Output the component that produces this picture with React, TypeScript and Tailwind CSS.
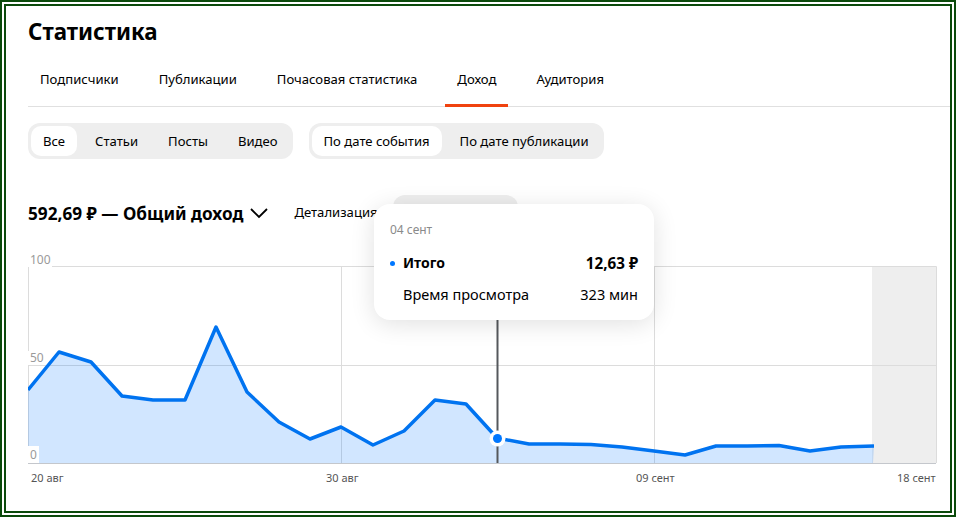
const font = "font-['Noto_Sans','Open_Sans',sans-serif]";

const tabs = ["Подписчики", "Публикации", "Почасовая статистика", "Доход", "Аудитория"];
const types = ["Все", "Статьи", "Посты", "Видео"];
const dates = ["По дате события", "По дате публикации"];

const points: [number, number][] = [
  [28, 390], [59, 352], [91, 362], [122, 396], [153, 400], [185, 400], [216, 327], [247, 392],
  [279, 422], [310, 439], [341, 427], [373, 445], [404, 431], [435, 400], [466, 404], [497, 438],
  [529, 444], [560, 444], [591, 444.5], [622, 447], [654, 451], [685, 455], [716, 446], [747, 446],
  [779, 445.5], [810, 451], [841, 447], [874, 446],
];

// svg starts at page (28,266)
const line = points.map(([x, y]) => `${x - 28},${y - 266}`).join(" ");
const area = `0,197 ${line} 845,197`;

function Segment({ items, active }: { items: string[]; active: string }) {
  return (
    <div className="flex h-9 items-center rounded-xl bg-[#eeeeee] pl-[3px]">
      {items.map((item) => (
        <div
          key={item}
          className={`flex h-[30px] items-center rounded-[10px] pt-0.5 text-[13.1px] ${item === active ? "mr-[3px] bg-white px-3" : "px-[15px]"}`}
        >
          {item}
        </div>
      ))}
    </div>
  );
}

function Chart() {
  return (
    <div className="relative mt-[35px] h-[198px] w-[909px]">
      <svg width="909" height="198" viewBox="0 0 909 198" className="block">
        <rect x="844" y="0" width="64" height="197" fill="#eeeeee" />
        <path d="M0.5 197V0.5H908.5V197" fill="none" stroke="#dcdcdc" />
        <path d="M0 99.5H908M313.5 0V197M626.5 0V197" stroke="#dcdcdc" />
        <polygon points={area} fill="#0077ff" fillOpacity="0.18" />
        <path d="M0 197.5H908" stroke="#c4c7cc" />
        <path d="M469.5 0V197" stroke="#55585c" strokeWidth="2" />
        <polyline points={line} fill="none" stroke="#0073f0" strokeWidth="3.5" strokeLinejoin="round" />
        <circle cx="469.5" cy="172.5" r="8" fill="#ffffff" />
        <circle cx="469.5" cy="172.5" r="4.5" fill="#0077ff" />
      </svg>
      <span className="absolute -top-3.5 left-0 bg-white pl-0.5 pr-px text-xs leading-[15px] text-[#9a9a9a]">100</span>
      <span className="absolute left-0 top-[85px] bg-white pl-0.5 pr-px text-xs leading-[14px] text-[#9a9a9a]">50</span>
      <span className="absolute left-0 top-[180px] bg-white pl-0.5 pr-0.5 text-xs leading-[17px] text-[#9a9a9a]">0</span>
    </div>
  );
}

function Tooltip() {
  return (
    <div className="absolute left-[374px] top-[204px] h-[116px] w-[280px] rounded-2xl bg-white px-4 pt-[18px] shadow-[0_4px_24px_rgba(0,0,0,0.12)]">
      <div className="text-xs leading-4 text-[#8a8a8a]">04 сент</div>
      <div className="mt-[15px] flex items-center justify-between text-[15.2px] font-bold leading-5">
        <div className="flex items-center">
          <span className="mr-2 h-[5px] w-[5px] rounded-full bg-[#0077ff]" />
          <span className="text-sm">Итого</span>
        </div>
        <span>12,63 ₽</span>
      </div>
      <div className="mt-[11px] flex justify-between pl-[13px] text-[14.5px] leading-5">
        <span>Время просмотра</span>
        <span>323 мин</span>
      </div>
    </div>
  );
}

export default function App() {
  return (
    <div className={`${font} relative h-[517px] w-[956px] overflow-hidden border-2 border-[#0b4a0b] bg-white text-black`}>
      <div className="h-full border-2 border-white">
        <div className="h-full border-2 border-[#0b4a0b] pl-[22px]">
          <h1 className="mt-2.5 text-[22.3px] font-bold leading-8">Статистика</h1>

          {/* Tabs */}
          <div className="mt-3 flex h-[47px] gap-4 border-b border-[#e0e0e0] text-[13.1px]">
            {tabs.map((tab) => (
              <div key={tab} className={`flex h-[47px] items-center px-3 ${tab === "Доход" ? "border-b-[3px] border-[#f0420f] pb-1" : "pb-[7px]"}`}>
                {tab}
              </div>
            ))}
          </div>

          {/* Filters */}
          <div className="mt-4 flex gap-4">
            <Segment items={types} active="Все" />
            <Segment items={dates} active="По дате события" />
          </div>

          {/* Summary row */}
          <div className="relative mt-9 flex h-9 items-center">
            <span className="pt-px text-[17.2px] font-bold">592,69 ₽ — Общий доход</span>
            <svg width="18" height="18" viewBox="0 0 18 18" className="ml-[7px]" fill="none" stroke="#000" strokeWidth="1.8">
              <path d="M1 5l8 8 8-8" />
            </svg>
            <span className="ml-[26px] text-[13.1px]">Детализация</span>
            <div className="absolute left-[365px] top-0 h-9 w-[125px] rounded-xl bg-[#eeeeee]" />
          </div>

          <Chart />

          {/* X axis */}
          <div className="ml-[3px] mt-1.5 flex whitespace-nowrap text-[11px] leading-4 text-[#555555]">
            <span className="w-[295px]">20 авг</span>
            <span className="w-[310px]">30 авг</span>
            <span className="w-[261px]">09 сент</span>
            <span>18 сент</span>
          </div>
        </div>
      </div>
      <div className="absolute -left-0.5 -top-0.5">
        <Tooltip />
      </div>
    </div>
  );
}
